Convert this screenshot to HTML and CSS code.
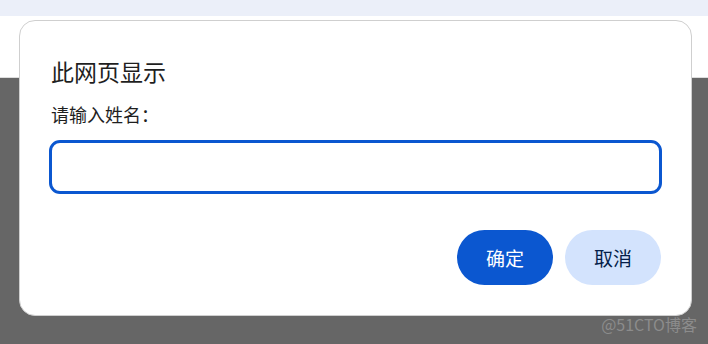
FILE: index.html
```html
<!DOCTYPE html>
<html lang="zh-CN">
<head>
    <meta charset="UTF-8">
    <meta name="viewport" content="width=device-width, initial-scale=1.0">
    <title>此网页显示</title>
    <link rel="stylesheet" href="styles.css">
</head>
<body>
    <div class="tabstrip"></div>
    <div class="toolbar"></div>
    <div class="page">
        <span class="watermark">@51CTO博客</span>
    </div>

    <div class="dialog">
        <div class="dialog-title">此网页显示</div>
        <label class="dialog-label" for="name">请输入姓名：</label>
        <input class="dialog-input" id="name" type="text">
        <div class="dialog-buttons">
            <button class="btn btn-primary">确定</button>
            <button class="btn btn-secondary">取消</button>
        </div>
    </div>
</body>
</html>
```

FILE: styles.css
```css
html, body {
    height: 100%;
}

body {
    margin: 0;
    display: flex;
    flex-direction: column;
    font-family: "Noto Sans CJK SC", "Noto Sans", sans-serif;
    background: #666666;
    overflow: hidden;
}

.tabstrip {
    height: 16px;
    background: #ebeff9; /* light blue strip */
}

.toolbar {
    height: 61px;
    background: #ffffff;
    border-bottom: 1px solid #dddddd;
}

.page {
    flex: 1;
    background: #666666;
    display: flex;
    justify-content: flex-end;
    align-items: flex-end;
}

.watermark {
    color: #8c8c8c;
    font-size: 16px;
    line-height: 20px;
    margin: 0 11px 10px 0;
}

/* the prompt box sits over the page */
.dialog {
    position: absolute;
    left: 19px;
    top: 20px;
    width: 673px;
    height: 296px;
    box-sizing: border-box;
    background: #ffffff;
    border: 1px solid #cfcfcf;
    border-radius: 16px;
    padding: 36px 29px 0 29px;
    display: flex;
    flex-direction: column;
}

.dialog-title {
    font-size: 23px;
    line-height: 28px;
    color: #1f1f1f;
    padding-left: 2px;
}

.dialog-label {
    margin-top: 17px;
    font-size: 18px;
    line-height: 24px;
    color: #1f1f1f;
    padding-left: 2px;
}

.dialog-input {
    margin-top: 14px;
    height: 54px;
    box-sizing: border-box;
    border: 3px solid #0b57d0;
    border-radius: 11px;
    outline: none;
    font-size: 18px;
    padding: 0 12px;
}

.dialog-buttons {
    margin-top: 36px;
    margin-right: 1px;
    display: flex;
    justify-content: flex-end;
    gap: 12px;
}

.btn {
    width: 96px;
    height: 55px;
    border: none;
    border-radius: 28px;
    font-family: inherit;
    font-size: 19px;
    cursor: pointer;
}

.btn-primary {
    background: #0b57d0;
    color: #ffffff;
}

.btn-secondary {
    background: #d3e3fd;
    color: #041e49;
}
```
